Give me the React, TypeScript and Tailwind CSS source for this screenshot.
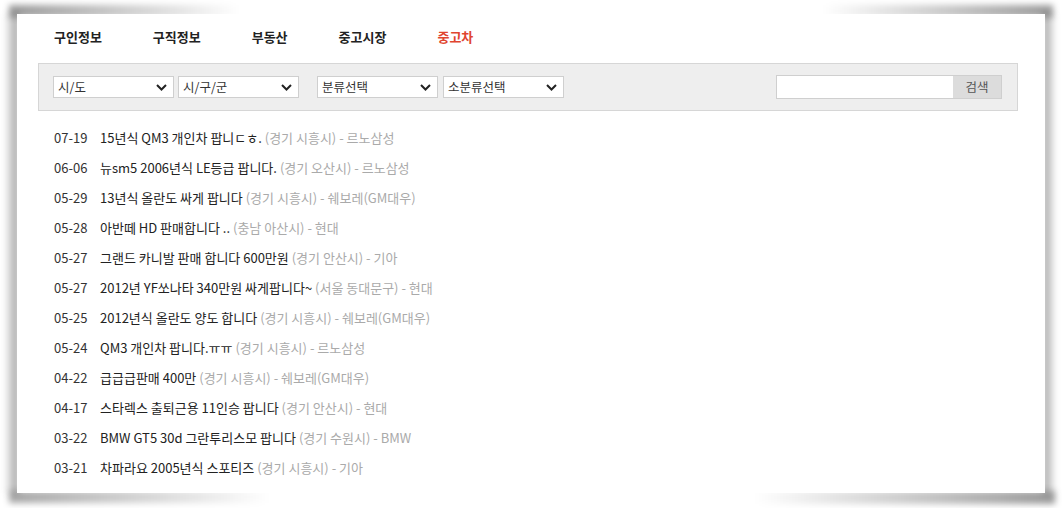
const navItems = ["구인정보", "구직정보", "부동산", "중고시장", "중고차"];

const posts = [
  { date: "07-19", title: "15년식 QM3 개인차 팝니ㄷㅎ.", meta: "(경기 시흥시) - 르노삼성" },
  { date: "06-06", title: "뉴sm5 2006년식 LE등급 팝니다.", meta: "(경기 오산시) - 르노삼성" },
  { date: "05-29", title: "13년식 올란도 싸게 팝니다", meta: "(경기 시흥시) - 쉐보레(GM대우)" },
  { date: "05-28", title: "아반떼 HD 판매합니다 ..", meta: "(충남 아산시) - 현대" },
  { date: "05-27", title: "그랜드 카니발 판매 합니다 600만원", meta: "(경기 안산시) - 기아" },
  { date: "05-27", title: "2012년 YF쏘나타 340만원 싸게팝니다~", meta: "(서울 동대문구) - 현대" },
  { date: "05-25", title: "2012년식 올란도 양도 합니다", meta: "(경기 시흥시) - 쉐보레(GM대우)" },
  { date: "05-24", title: "QM3 개인차 팝니다.ㅠㅠ", meta: "(경기 시흥시) - 르노삼성" },
  { date: "04-22", title: "급급급판매 400만", meta: "(경기 시흥시) - 쉐보레(GM대우)" },
  { date: "04-17", title: "스타렉스 출퇴근용 11인승 팝니다", meta: "(경기 안산시) - 현대" },
  { date: "03-22", title: "BMW GT5 30d 그란투리스모 팝니다", meta: "(경기 수원시) - BMW" },
  { date: "03-21", title: "차파라요 2005년식 스포티즈", meta: "(경기 시흥시) - 기아" },
];

function Chevron() {
  return (
    <svg width="11" height="7" viewBox="0 0 11 7" className="shrink-0">
      <path d="M1 1l4.5 4.5L10 1" fill="none" stroke="#222" strokeWidth="2" />
    </svg>
  );
}

function FakeSelect({ label }: { label: string }) {
  return (
    <div className="flex items-center justify-between w-[121px] h-[22px] bg-white border border-[#cfcfcf] pl-[4px] pr-[6px] text-[12.5px] text-[#333]">
      <span>{label}</span>
      <Chevron />
    </div>
  );
}

export default function App() {
  return (
    <div
      className="w-[1062px] h-[508px] bg-white pl-[17px] pt-[14px]"
      style={{ fontFamily: '"Noto Sans CJK KR", "Noto Sans", sans-serif' }}
    >
      <div className="relative w-[1028px] h-[479px]">
        {/* page-curl shadow pieces */}
        <div className="absolute -left-[13px] top-0 w-[15px] h-full bg-linear-to-r from-transparent to-black/40 blur-[3px]" />
        <div className="absolute -right-[11px] top-0 w-[13px] h-full bg-linear-to-l from-transparent to-black/40 blur-[3px]" />
        <div className="absolute -left-[8px] -top-[9px] w-[230px] h-[12px] bg-linear-to-r from-black/40 to-transparent blur-[3px]" />
        <div className="absolute -right-[8px] -top-[9px] w-[230px] h-[12px] bg-linear-to-l from-black/40 to-transparent blur-[3px]" />
        <div className="absolute -left-[8px] -bottom-[10px] w-[260px] h-[12px] bg-linear-to-r from-black/35 to-transparent blur-[3px]" />
        <div className="absolute -right-[10px] -bottom-[11px] w-[300px] h-[13px] bg-linear-to-l from-black/40 to-transparent blur-[3px]" />

        <div className="relative h-full bg-white">
          <nav className="flex gap-[51px] pl-[37px] pt-[14px] h-[49px] text-[13px] font-bold text-[#222] leading-[18px]">
            {navItems.map((item, i) => (
              <span key={item} className={i === navItems.length - 1 ? "text-[#e0452f]" : ""}>
                {item}
              </span>
            ))}
          </nav>

          <div className="ml-[21px] mr-[27px] h-[48px] flex items-center bg-[#eeeeee] border border-[#d6d6d6] pl-[14px] pr-[15px]">
            <div className="flex gap-[4px]">
              <FakeSelect label="시/도" />
              <FakeSelect label="시/구/군" />
            </div>
            <div className="flex gap-[5px] ml-[18px]">
              <FakeSelect label="분류선택" />
              <FakeSelect label="소분류선택" />
            </div>
            <div className="ml-auto flex h-[24px]">
              <div className="w-[177px] bg-white border border-[#cfcfcf] border-r-0" />
              <button className="w-[49px] bg-[#dcdcdc] border border-[#cfcfcf] border-l-0 text-[12.5px] text-[#555]">
                검색
              </button>
            </div>
          </div>

          <ul className="pl-[37px] pt-[12px] text-[13px]">
            {posts.map((p, i) => (
              <li key={i} className="flex h-[30px] items-center whitespace-pre">
                <span className="w-[46px] text-[#333]">{p.date}</span>
                <span className="text-[#222]">{p.title} </span>
                <span className="text-[#aaaaaa]">{p.meta}</span>
              </li>
            ))}
          </ul>
        </div>
      </div>
    </div>
  );
}
